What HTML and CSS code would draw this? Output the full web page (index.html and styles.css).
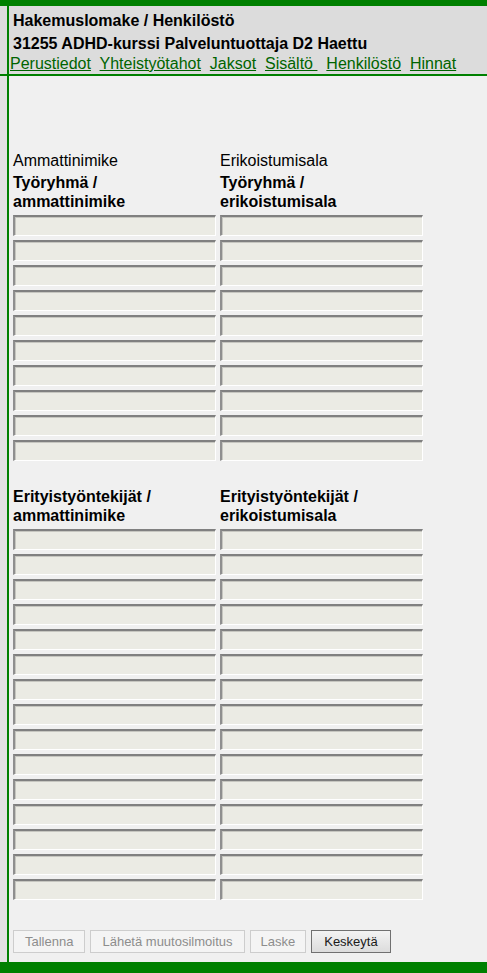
FILE: index.html
```html
<!DOCTYPE html>
<html lang="fi">
<head>
<meta charset="utf-8">
<title>Hakemuslomake / Henkilöstö</title>
<link rel="stylesheet" href="styles.css">
</head>
<body>
<div class="page">
  <div class="topbar"></div>
  <div class="row">
    <div class="gutter gutter-head"></div>
    <header class="header">
      <div class="title">Hakemuslomake / Henkilöstö</div>
      <div class="title">31255 ADHD-kurssi Palveluntuottaja D2 Haettu</div>
      <nav class="tabs"><a href="#">Perustiedot</a>&nbsp; <a href="#">Yhteistyötahot</a>&nbsp; <a href="#">Jaksot</a>&nbsp; <a href="#">Sisältö </a>&nbsp; <a href="#">Henkilöstö</a>&nbsp; <a href="#">Hinnat</a></nav>
    </header>
  </div>
  <div class="divider"></div>
  <div class="row row-body">
    <div class="gutter"></div>
    <main class="content">
      <section class="grid">
        <div class="label">Ammattinimike</div>
        <div class="label">Erikoistumisala</div>
        <div class="label-bold">Työryhmä /<br>ammattinimike</div>
        <div class="label-bold">Työryhmä /<br>erikoistumisala</div>
        <input class="field" type="text" disabled><input class="field" type="text" disabled>
        <input class="field" type="text" disabled><input class="field" type="text" disabled>
        <input class="field" type="text" disabled><input class="field" type="text" disabled>
        <input class="field" type="text" disabled><input class="field" type="text" disabled>
        <input class="field" type="text" disabled><input class="field" type="text" disabled>
        <input class="field" type="text" disabled><input class="field" type="text" disabled>
        <input class="field" type="text" disabled><input class="field" type="text" disabled>
        <input class="field" type="text" disabled><input class="field" type="text" disabled>
        <input class="field" type="text" disabled><input class="field" type="text" disabled>
        <input class="field" type="text" disabled><input class="field" type="text" disabled>
      </section>
      <section class="grid grid-second">
        <div class="label-bold">Erityistyöntekijät /<br>ammattinimike</div>
        <div class="label-bold">Erityistyöntekijät /<br>erikoistumisala</div>
        <input class="field" type="text" disabled><input class="field" type="text" disabled>
        <input class="field" type="text" disabled><input class="field" type="text" disabled>
        <input class="field" type="text" disabled><input class="field" type="text" disabled>
        <input class="field" type="text" disabled><input class="field" type="text" disabled>
        <input class="field" type="text" disabled><input class="field" type="text" disabled>
        <input class="field" type="text" disabled><input class="field" type="text" disabled>
        <input class="field" type="text" disabled><input class="field" type="text" disabled>
        <input class="field" type="text" disabled><input class="field" type="text" disabled>
        <input class="field" type="text" disabled><input class="field" type="text" disabled>
        <input class="field" type="text" disabled><input class="field" type="text" disabled>
        <input class="field" type="text" disabled><input class="field" type="text" disabled>
        <input class="field" type="text" disabled><input class="field" type="text" disabled>
        <input class="field" type="text" disabled><input class="field" type="text" disabled>
        <input class="field" type="text" disabled><input class="field" type="text" disabled>
        <input class="field" type="text" disabled><input class="field" type="text" disabled>
      </section>
      <div class="actions">
        <button class="btn" type="button" disabled>Tallenna</button>
        <button class="btn" type="button" disabled>Lähetä muutosilmoitus</button>
        <button class="btn btn-narrow" type="button" disabled>Laske</button>
        <button class="btn btn-active" type="button">Keskeytä</button>
      </div>
    </main>
  </div>
  <div class="bottombar"></div>
</div>
</body>
</html>
```

FILE: styles.css
```css
html, body {
  margin: 0;
  padding: 0;
}

body {
  font-family: "Liberation Sans", Arial, sans-serif;
  font-size: 16px;
  color: #000;
  background: #f0f0f0;
}

.page {
  display: flex;
  flex-direction: column;
  height: 973px;
  overflow: hidden;
}

.topbar {
  height: 6px;
  background: #008000;
  flex: none;
}

.bottombar {
  height: 11px;
  background: #008000;
  flex: none;
}

.divider {
  height: 2px;
  background: #008000;
  flex: none;
}

.row {
  display: flex;
  flex: none;
}

.row-body {
  flex: 1;
}

.gutter {
  width: 7px;
  flex: none;
  background: #e2e2e2;
}

.gutter-head {
  background: #dcdcdc;
}

.header {
  flex: 1;
  border-left: 2px solid #008000;
  background: #dcdcdc;
  padding: 3px 0 1px;
}

.title {
  font-weight: bold;
  line-height: 23px;
  padding-left: 4px;
  white-space: nowrap;
}

.tabs {
  line-height: 18px;
  padding-left: 1px;
  white-space: nowrap;
}

.tabs a {
  color: #006400;
  text-decoration: underline;
  white-space: pre;
}

.content {
  flex: 1;
  border-left: 2px solid #008000;
  background: #f0f0f0;
  padding: 75px 0 0 4px;
}

.grid {
  display: grid;
  grid-template-columns: 203px 203px;
  column-gap: 4px;
  align-items: start;
}

.grid-second {
  margin-top: 22px;
}

.label {
  line-height: 19px;
  margin-bottom: 3px;
  white-space: nowrap;
}

.label-bold {
  font-weight: bold;
  line-height: 19px;
  margin-bottom: 4px;
  white-space: nowrap;
}

.field {
  display: block;
  box-sizing: border-box;
  width: 203px;
  height: 21px;
  margin: 0 0 4px;
  padding: 0 2px;
  background: #ebebe4;
  border-style: solid;
  border-width: 2px 1px 1px 2px;
  border-color: #808080 #ffffff #ffffff #8f8f8f;
  box-shadow: inset 1px 1px 0 #c6c6c0;
  font-family: "Liberation Sans", Arial, sans-serif;
  font-size: 13px;
}

.actions {
  display: flex;
  gap: 5px;
  margin-top: 26px;
}

.btn {
  box-sizing: border-box;
  height: 23px;
  padding: 0 11px;
  font-family: "Liberation Sans", Arial, sans-serif;
  font-size: 13px;
  color: #8d8d8d;
  background: #f4f4f4;
  border: 1px solid #cdcdcd;
  border-radius: 0;
  line-height: 21px;
}

.btn-narrow {
  padding: 0 10px;
}

.btn-active {
  color: #1a1a1a;
  background: linear-gradient(#f3f3f3, #dcdcdc);
  border-color: #707070;
  padding: 0 12px;
}
```
